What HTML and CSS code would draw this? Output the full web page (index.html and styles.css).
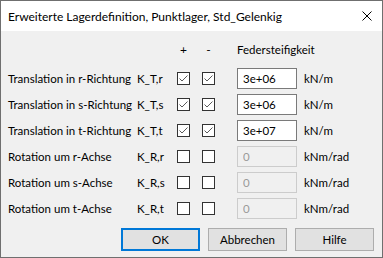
FILE: index.html
```html
<!DOCTYPE html>
<html lang="de">
<head>
  <meta charset="UTF-8" />
  <title>Erweiterte Lagerdefinition</title>
  <link rel="stylesheet" href="styles.css">
</head>
<body>

  <div class="dialog">
    <div class="titlebar">
      <span class="title">Erweiterte Lagerdefinition, Punktlager, Std_Gelenkig</span>
      <svg class="close" width="10" height="10" viewBox="0 0 10 10">
        <path d="M0.5 0.5 L9.5 9.5 M9.5 0.5 L0.5 9.5" stroke="#000" stroke-width="1" fill="none" />
      </svg>
    </div>

    <div class="content">
      <div class="grid">
        <span class="head"></span>
        <span class="head"></span>
        <span class="head sign">+</span>
        <span class="head sign">-</span>
        <span class="head spring">Federsteifigkeit</span>
        <span class="head"></span>

        <span class="label">Translation in r-Richtung</span>
        <span class="key">K_T,r</span>
        <span class="cb"><svg width="11" height="11" viewBox="0 0 11 11"><path d="M1.5 5.5 L4 8 L9.5 2.5" stroke="#5a5a5a" stroke-width="1" fill="none" /></svg></span>
        <span class="cb"><svg width="11" height="11" viewBox="0 0 11 11"><path d="M1.5 5.5 L4 8 L9.5 2.5" stroke="#5a5a5a" stroke-width="1" fill="none" /></svg></span>
        <input class="field" type="text" value="3e+06">
        <span class="unit">kN/m</span>

        <span class="label">Translation in s-Richtung</span>
        <span class="key">K_T,s</span>
        <span class="cb"><svg width="11" height="11" viewBox="0 0 11 11"><path d="M1.5 5.5 L4 8 L9.5 2.5" stroke="#5a5a5a" stroke-width="1" fill="none" /></svg></span>
        <span class="cb"><svg width="11" height="11" viewBox="0 0 11 11"><path d="M1.5 5.5 L4 8 L9.5 2.5" stroke="#5a5a5a" stroke-width="1" fill="none" /></svg></span>
        <input class="field" type="text" value="3e+06">
        <span class="unit">kN/m</span>

        <span class="label">Translation in t-Richtung</span>
        <span class="key">K_T,t</span>
        <span class="cb"><svg width="11" height="11" viewBox="0 0 11 11"><path d="M1.5 5.5 L4 8 L9.5 2.5" stroke="#5a5a5a" stroke-width="1" fill="none" /></svg></span>
        <span class="cb"><svg width="11" height="11" viewBox="0 0 11 11"><path d="M1.5 5.5 L4 8 L9.5 2.5" stroke="#5a5a5a" stroke-width="1" fill="none" /></svg></span>
        <input class="field" type="text" value="3e+07">
        <span class="unit">kN/m</span>

        <span class="label">Rotation um r-Achse</span>
        <span class="key">K_R,r</span>
        <span class="cb"></span>
        <span class="cb"></span>
        <input class="field" type="text" value="0" disabled>
        <span class="unit">kNm/rad</span>

        <span class="label">Rotation um s-Achse</span>
        <span class="key">K_R,s</span>
        <span class="cb"></span>
        <span class="cb"></span>
        <input class="field" type="text" value="0" disabled>
        <span class="unit">kNm/rad</span>

        <span class="label">Rotation um t-Achse</span>
        <span class="key">K_R,t</span>
        <span class="cb"></span>
        <span class="cb"></span>
        <input class="field" type="text" value="0" disabled>
        <span class="unit">kNm/rad</span>
      </div>

      <div class="buttons">
        <button class="default">OK</button>
        <button>Abbrechen</button>
        <button>Hilfe</button>
      </div>
    </div>
  </div>

</body>
</html>
```

FILE: styles.css
```css
body {
  margin: 0;
  font-family: Lato, 'Open Sans', sans-serif;
  font-size: 11.5px;
  color: #000;
}

.dialog {
  width: 383px;
  height: 258px;
  box-sizing: border-box;
  border: 1px solid #6f6f6f;
  background: #f0f0f0;
  display: flex;
  flex-direction: column;
}

.titlebar {
  height: 30px;
  background: #fff;
  display: flex;
  align-items: center;
  justify-content: space-between;
  padding: 0 10px 0 7px;
}

.title {
  font-size: 12px;
}

.content {
  padding: 10px 8px 0 7px;
}

.grid {
  display: grid;
  grid-template-columns: 129px 40px 25px 35px 60px auto;
  grid-template-rows: 24px repeat(6, 26px);
  align-items: center;
  white-space: nowrap;
}

.head {
  align-self: start;
  line-height: 18px;
}

.sign {
  width: 13px;
  text-align: center;
  font-size: 12px;
}

.cb {
  width: 13px;
  height: 13px;
  box-sizing: border-box;
  border: 1px solid #333;
  background: #fff;
  display: flex;
}

.field {
  width: 60px;
  height: 21px;
  box-sizing: border-box;
  margin: 0;
  border: 1px solid #7a7a7a;
  background: #fff;
  padding: 0 5px;
  font-family: inherit;
  font-size: 11.5px;
  color: #000;
}

.field:disabled {
  border-color: #cccccc;
  background: #f0f0f0;
  color: #9a9a9a;
}

.unit {
  padding-left: 7px;
}

.buttons {
  display: flex;
  justify-content: flex-end;
  gap: 8px;
  margin-top: 7px;
}

button {
  width: 79px;
  height: 23px;
  background: #e1e1e1;
  border: 1px solid #adadad;
  font-family: inherit;
  font-size: 11.5px;
  color: #000;
  padding: 0;
}

button.default {
  border: 2px solid #0078d7;
}
```
